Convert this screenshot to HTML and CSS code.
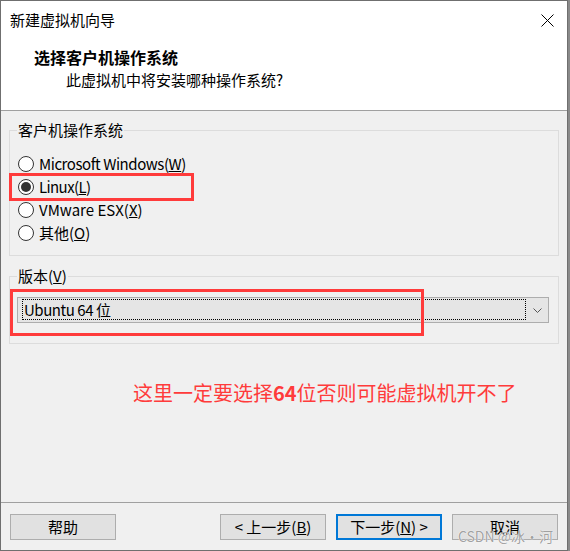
FILE: index.html
```html
<!DOCTYPE html>
<html lang="zh-CN">
<head>
<meta charset="utf-8">
<title>新建虚拟机向导</title>
<link rel="stylesheet" href="styles.css">
</head>
<body>
<div class="window">
  <div class="header">
    <div class="titlebar">
      <span class="wtitle">新建虚拟机向导</span>
      <svg class="close" width="13" height="13" viewBox="0 0 13 13"><path d="M0.5 0.5L12.5 12.5M12.5 0.5L0.5 12.5" stroke="#000" stroke-width="1" fill="none"/></svg>
    </div>
    <div class="htitle">选择客户机操作系统</div>
    <div class="hsub">此虚拟机中将安装哪种操作系统?</div>
  </div>
  <div class="main">
    <fieldset class="group os">
      <legend>客户机操作系统</legend>
      <div class="radio"><span class="circle"></span><span class="tight">Microsoft Windows(<u>W</u>)</span></div>
      <div class="radio"><span class="circle checked"></span><span class="tighter">Linux(<u>L</u>)</span></div>
      <div class="radio"><span class="circle"></span><span>VMware ESX(<u>X</u>)</span></div>
      <div class="radio"><span class="circle"></span><span>其他(<u>O</u>)</span></div>
    </fieldset>
    <fieldset class="group ver">
      <legend>版本(<u>V</u>)</legend>
      <div class="select">
        <div class="focus"><span class="tight">Ubuntu 64 位</span></div>
        <div class="arrow"><svg width="9" height="5" viewBox="0 0 9 5"><path d="M0.5 0.5L4.5 4.5L8.5 0.5" stroke="#555" stroke-width="1" fill="none"/></svg></div>
      </div>
    </fieldset>
    <p class="note">这里一定要选择<span class="num">64</span>位否则可能虚拟机开不了</p>
  </div>
  <div class="footer">
    <button class="btn">帮助</button>
    <button class="btn back">&lt; 上一步(<u>B</u>)</button>
    <button class="btn next">下一步(<u>N</u>) &gt;</button>
    <button class="btn">取消</button>
  </div>
  <div class="mark mark-linux"></div>
  <div class="mark mark-ver"></div>
  <div class="watermark">CSDN @冰·河</div>
</div>
</body>
</html>
```
FILE: styles.css
```css
html, body {
  margin: 0;
  padding: 0;
  background: #8a8a8a;
}
.window {
  position: relative;
  width: 568px;
  height: 551px;
  box-sizing: border-box;
  border: 1px solid #6f6f6f;
  background: #f0f0f0;
  display: flex;
  flex-direction: column;
  font-family: "Noto Sans CJK SC", "Noto Sans", sans-serif;
  font-size: 15px;
  color: #000;
}
.header {
  background: #fff;
  height: 110px;
  box-sizing: border-box;
  border-bottom: 1px solid #a0a0a0;
  padding-top: 9px;
}
.titlebar {
  display: flex;
  justify-content: space-between;
  align-items: center;
  height: 20px;
  padding: 0 13px 0 9px;
}
.wtitle {
  line-height: 20px;
}
.close {
  display: block;
}
.htitle {
  font-weight: bold;
  font-size: 16px;
  line-height: 20px;
  margin-top: 17px;
  padding-left: 33px;
}
.hsub {
  line-height: 20px;
  margin-top: 3px;
  padding-left: 65px;
}
.main {
  flex: 1;
  padding: 9px 8px 0 8px;
}
.group {
  margin: 0;
  min-width: 0;
  border: 1px solid #dcdcdc;
  padding: 12px 9px 11px 7px;
}
.group legend {
  padding: 0 1px;
  line-height: 20px;
  font-size: 15px;
}
.radio {
  display: flex;
  align-items: center;
  gap: 5px;
  height: 23px;
  line-height: 20px;
}
.tight {
  letter-spacing: -0.45px;
}
.tighter {
  letter-spacing: -0.6px;
}
.circle {
  width: 16px;
  height: 16px;
  box-sizing: border-box;
  border: 1px solid #333;
  border-radius: 50%;
  background: #fff;
  margin-left: 1px;
  display: flex;
  align-items: center;
  justify-content: center;
}
.circle.checked::after {
  content: "";
  width: 10px;
  height: 10px;
  border-radius: 50%;
  background: #333;
}
.ver {
  margin-top: 10px;
  padding-top: 11px;
  padding-bottom: 20px;
}
.select {
  height: 26px;
  box-sizing: border-box;
  border: 1px solid #adadad;
  background: #e5e5e5;
  display: flex;
  align-items: center;
  padding-left: 4px;
}
.focus {
  flex: 1;
  height: 21px;
  box-sizing: border-box;
  border: 1px dotted #000;
  line-height: 19px;
  padding-left: 1px;
  margin-top: -2px;
}
.arrow {
  width: 22px;
  display: flex;
  justify-content: center;
  align-items: center;
}
.arrow svg {
  display: block;
}
.note {
  margin: 35px 0 0;
  padding-left: 124px;
  color: #ff3b3b;
  font-size: 20px;
  line-height: 28px;
}
.note .num {
  font-weight: bold;
}
.footer {
  height: 48px;
  box-sizing: border-box;
  border-top: 1px solid #a0a0a0;
  display: flex;
  align-items: flex-start;
  gap: 10px;
  padding: 11px 9px 0 9px;
}
.btn {
  width: 106px;
  height: 26px;
  box-sizing: border-box;
  border: 1px solid #adadad;
  background: #e1e1e1;
  font-family: inherit;
  font-size: 15px;
  line-height: 20px;
  color: #000;
  padding: 0;
  margin: 0;
  border-radius: 0;
}
.back {
  margin-left: auto;
}
.next {
  border: 2px solid #0078d7;
}
.mark {
  position: absolute;
  box-sizing: border-box;
  border: 3px solid #ff3b3b;
}
.mark-linux {
  left: 8px;
  top: 172px;
  width: 185px;
  height: 28px;
}
.mark-ver {
  left: 9px;
  top: 288px;
  width: 414px;
  height: 47px;
}
.watermark {
  position: absolute;
  right: 14px;
  top: 527px;
  font-size: 14px;
  line-height: 16px;
  color: rgba(130, 130, 130, 0.75);
  text-shadow: 0 0 1px #fff, 0 0 1px #fff;
}
```
